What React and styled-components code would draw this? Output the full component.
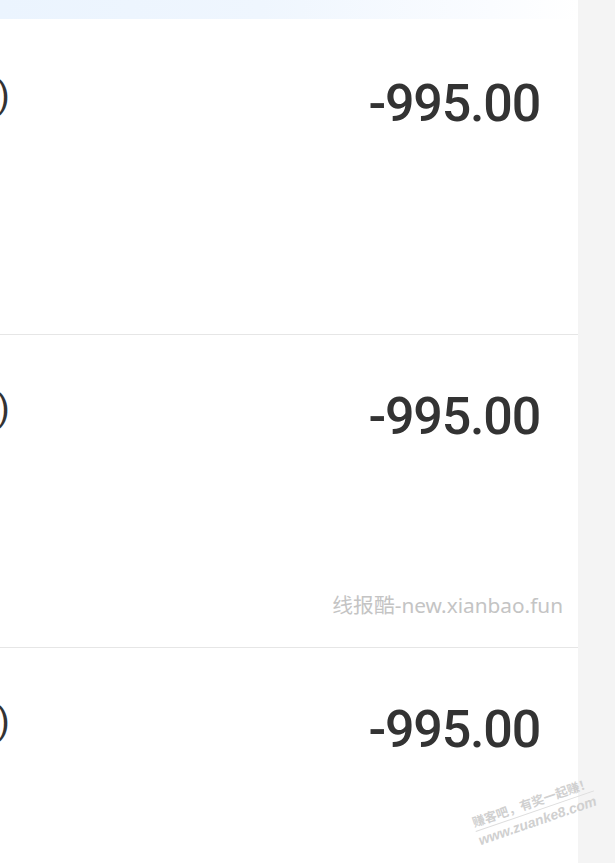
import React from "react";
import styled, { createGlobalStyle } from "styled-components";

const Global = createGlobalStyle`
  html, body { margin: 0; padding: 0; background: #f4f4f4; }
  body { font-family: Roboto, "Noto Sans", "Noto Sans CJK SC", sans-serif; }
`;

const Page = styled.div`
  position: relative;
  display: flex;
  width: 615px;
  height: 863px;
  overflow: hidden;
  background: #f4f4f4;
`;

const Panel = styled.div`
  position: relative;
  width: 578px;
  flex: none;
  background: #ffffff;
  display: flex;
  flex-direction: column;
`;

const TopBar = styled.div`
  flex: none;
  height: 19px;
  margin-bottom: 3px;
  background: linear-gradient(90deg, #ebf4fe 0%, #eff6fe 45%, #fafcff 85%, #ffffff 100%);
`;

const Row = styled.div`
  box-sizing: border-box;
  height: 313px;
  flex: none;
  display: flex;
  justify-content: space-between;
  align-items: flex-start;
  padding: 56px 38px 0 0;
  border-bottom: 1px solid #e6e6e6;
  &:last-child { border-bottom: none; }
`;

const Label = styled.span`
  margin-left: -3px;
  font-size: 37px;
  line-height: 36px;
  color: #333333;
  font-weight: 400;
`;

const Amount = styled.span`
  font-size: 52px;
  line-height: 52px;
  font-weight: 500;
  color: #333333;
  letter-spacing: -1.2px;
`;

const SiteMark = styled.div`
  position: absolute;
  right: 15px;
  top: 592px;
  font-family: "Noto Sans", "Noto Sans CJK SC", sans-serif;
  font-size: 20.8px;
  line-height: 26px;
  color: #c4c4c4;
  white-space: nowrap;
`;

const Stamp = styled.div`
  position: absolute;
  left: 470px;
  top: 815px;
  transform: rotate(-19deg);
  transform-origin: left top;
  font-family: "Liberation Sans", "Noto Sans CJK SC", sans-serif;
  font-weight: 700;
  color: #d0d0d0;
  white-space: nowrap;
  display: flex;
  flex-direction: column;
  align-items: flex-start;
`;

const StampTop = styled.span`
  font-size: 12.5px;
  line-height: 16px;
  padding-bottom: 1px;
  border-bottom: 1px solid #dddddd;
  font-family: "Noto Sans CJK SC", sans-serif;
`;

const StampBottom = styled.span`
  font-size: 14px;
  line-height: 18px;
  font-style: italic;
`;

const Side = styled.div`
  flex: 1;
  background: #f4f4f4;
`;

const rows = ["-995.00", "-995.00", "-995.00"];

export default function App() {
  return (
    <>
      <Global />
      <Page>
        <Panel>
          <TopBar />
          {rows.map((a, i) => (
            <Row key={i}>
              <Label>)</Label>
              <Amount>{a}</Amount>
            </Row>
          ))}
          <SiteMark>线报酷-new.xianbao.fun</SiteMark>
        </Panel>
        <Side />
        <Stamp>
          <StampTop>赚客吧，有奖一起赚！</StampTop>
          <StampBottom>www.zuanke8.com</StampBottom>
        </Stamp>
      </Page>
    </>
  );
}
